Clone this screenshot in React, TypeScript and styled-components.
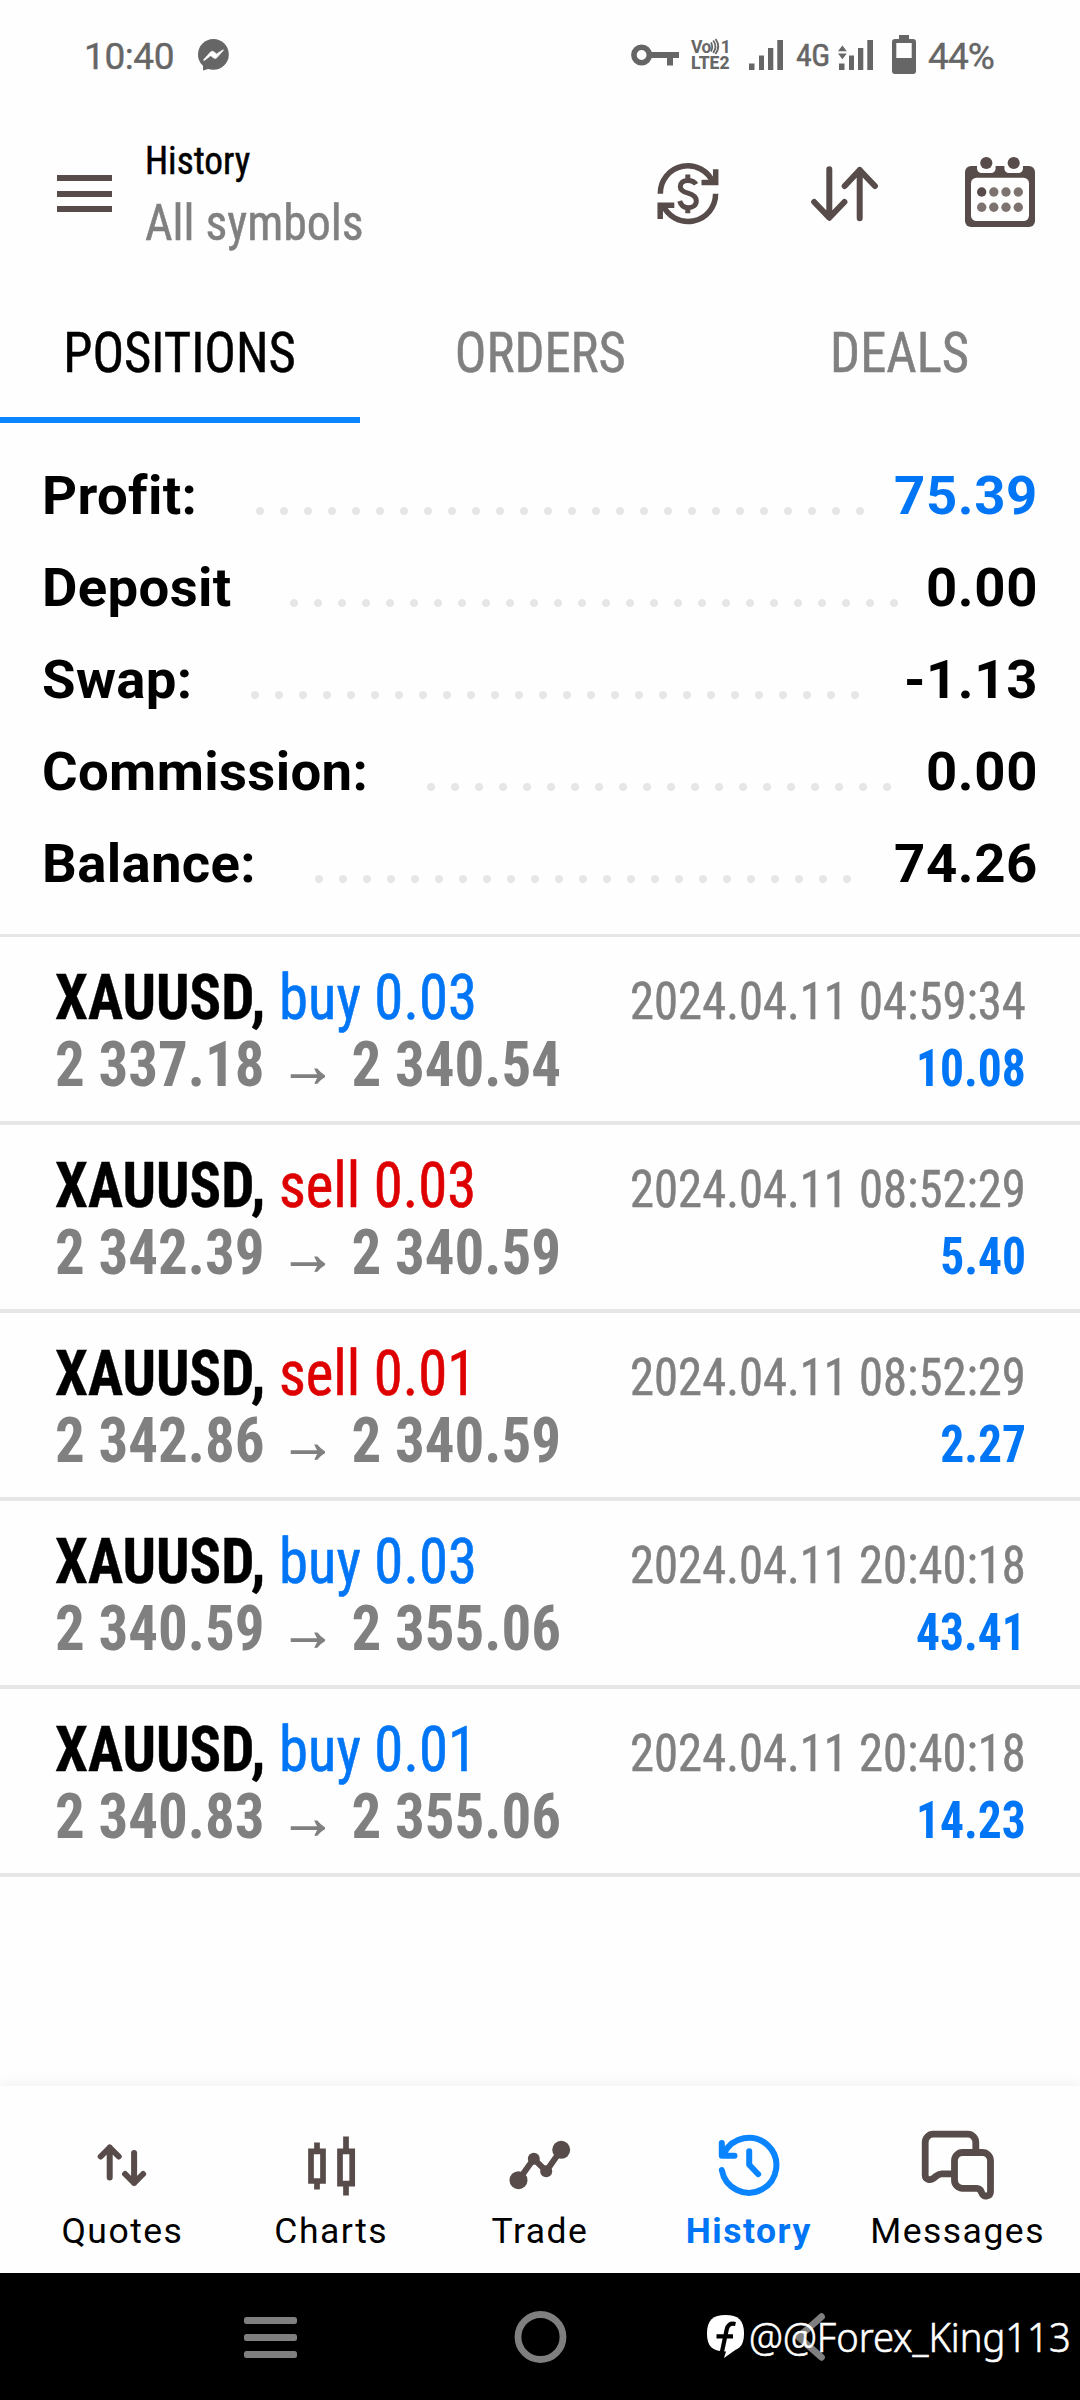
import React from "react";
import styled, { createGlobalStyle } from "styled-components";

const ICON = "#574c49";
const BLUE = "#0075f5";
const BRIGHT = "#0a84ff";
const RED = "#de0000";
const GREY = "#808080";
const STATUS = "#666666";
const LINE = "#e6e6e6";

const GlobalStyle = createGlobalStyle`
  *, *::before, *::after { box-sizing: border-box; }
  body {
    margin: 0;
    background: #fff;
    font-family: Roboto, "Liberation Sans", sans-serif;
    color: #000;
  }
  svg { display: block; flex: none; overflow: visible; }
`;

const Screen = styled.div`
  width: 1080px;
  height: 2400px;
  display: flex;
  flex-direction: column;
  background: #fefefe;
  overflow: hidden;
`;

/* ---------- status bar ---------- */

const StatusBar = styled.div`
  height: 109px;
  display: flex;
  align-items: center;
  color: ${STATUS};
`;

const StatusLeft = styled.div`
  flex: 0 0 631px;
  display: flex;
  align-items: center;
  gap: 23px;
  padding-left: 84px;
`;

const StatusText = styled.span`
  font-size: 37px;
  line-height: 44px;
  padding-top: 5px;
  letter-spacing: -0.9px;
  -webkit-text-stroke: 0.4px currentColor;
`;

const Clock = styled(StatusText)`
  width: 91px;
  letter-spacing: -0.4px;
`;

const StatusRight = styled.div`
  display: flex;
  align-items: center;
`;

const StatusItem = styled.div<{ $width: number; $gap: number }>`
  width: ${(p) => p.$width}px;
  margin-right: ${(p) => p.$gap}px;
  white-space: nowrap;
`;

const Volte = styled.div`
  display: flex;
  flex-direction: column;
  font-weight: 800;
  font-size: 17.5px;
  line-height: 16px;
`;

const VolteTop = styled.div`
  display: flex;
  align-items: center;
  height: 16px;
  letter-spacing: -0.6px;
  font-weight: 700;
`;

const VolteOne = styled.span`
  margin-left: 3px;
`;

const Network = styled.div`
  font-stretch: 75%;
  font-size: 32px;
  line-height: 36px;
  letter-spacing: -0.5px;
  -webkit-text-stroke: 0.5px currentColor;
`;

/* ---------- header ---------- */

const Header = styled.header`
  height: 169px;
  display: flex;
  align-items: center;
  padding: 0 45px 0 57px;
`;

const MenuButton = styled.div`
  width: 55px;
  height: 37px;
  display: flex;
  flex-direction: column;
  justify-content: space-between;
  flex: none;
`;

const MenuBar = styled.span`
  height: 6px;
  background: ${ICON};
`;

const Titles = styled.div`
  flex: 1;
  display: flex;
  flex-direction: column;
  gap: 7px;
  padding: 5px 0 0 33px;
  font-stretch: 75%;
  -webkit-text-stroke: 0.5px currentColor;
  white-space: nowrap;
`;

const Title = styled.div`
  font-size: 39px;
  line-height: 46px;
  transform: scaleX(0.955);
  transform-origin: left center;
`;

const Subtitle = styled.div`
  font-size: 50.5px;
  line-height: 64px;
  color: ${GREY};
  transform: scaleX(0.947);
  transform-origin: left center;
  -webkit-text-stroke: 0.5px ${GREY};
`;

const Actions = styled.div`
  display: flex;
  align-items: center;
  gap: 84.5px;
`;

/* ---------- tabs ---------- */

const Tabs = styled.nav`
  display: grid;
  grid-template-columns: repeat(3, 1fr);
  height: 145px;
  flex: none;
`;

const Tab = styled.div<{ $active?: boolean }>`
  display: flex;
  justify-content: center;
  align-items: center;
  padding-top: 10px;
  border-bottom: 6px solid ${(p) => (p.$active ? BRIGHT : "transparent")};
  color: ${(p) => (p.$active ? "#000" : GREY)};
  font-size: 55px;
  font-stretch: 75%;
`;

const TabLabel = styled.span`
  transform: scaleX(0.957);
  -webkit-text-stroke: 0.5px currentColor;
`;

/* ---------- account summary ---------- */

const Summary = styled.section`
  padding: 28px 42px 23px 42px;
  border-bottom: 3px solid ${LINE};
`;

const SummaryRow = styled.div`
  height: 92px;
  display: flex;
  align-items: center;
  padding-bottom: 4px;
  font-size: 54.5px;
  font-weight: 700;
  letter-spacing: 0.35px;
`;

const Leader = styled.span<{ $dots: number }>`
  width: ${(p) => p.$dots * 24}px;
  height: 8px;
  margin: 32px 0 0 58.5px;
  background: radial-gradient(circle at 4px 4px, #e6e6e6 3.6px, transparent 4.4px) 0 0 / 24px 8px repeat-x;
`;

const SummaryValue = styled.span<{ $accent?: boolean }>`
  margin-left: auto;
  letter-spacing: 0.6px;
  color: ${(p) => (p.$accent ? BLUE : "#000")};
`;

/* ---------- positions ---------- */

const PositionList = styled.main`
  flex: 1;
`;

const Position = styled.article`
  height: 188px;
  padding: 27px 54px 0 55px;
  border-bottom: 4px solid ${LINE};
  font-stretch: 75%;
`;

const PositionLine = styled.div`
  display: flex;
  justify-content: space-between;
  align-items: baseline;
  height: 67px;
  line-height: 67px;
  font-size: 63px;
  white-space: nowrap;
`;

const Instrument = styled.div`
  white-space: pre;
  transform: scaleX(0.933);
  transform-origin: left center;
`;

const Symbol = styled.span`
  font-weight: 700;
  -webkit-text-stroke: 0.4px currentColor;
`;

const Side = styled.span<{ $side: "buy" | "sell" }>`
  color: ${(p) => (p.$side === "buy" ? BLUE : RED)};
  -webkit-text-stroke: 0.6px currentColor;
`;

const Prices = styled.div`
  display: flex;
  align-items: baseline;
  color: ${GREY};
  font-weight: 700;
  transform: scaleX(0.936);
  transform-origin: left center;
`;

const Arrow = styled.span`
  width: 93px;
  display: flex;
  justify-content: center;
  font-family: "Liberation Sans", sans-serif;
  font-size: 60px;
  font-weight: 400;
  -webkit-text-stroke: 1.2px ${GREY};
`;

const Time = styled.time`
  font-size: 51px;
  color: ${GREY};
  transform: scaleX(0.954);
  transform-origin: right center;
  -webkit-text-stroke: 0.5px currentColor;
`;

const Profit = styled.span`
  font-size: 51px;
  font-weight: 700;
  color: ${BLUE};
  transform: scaleX(0.933);
  transform-origin: right center;
`;

/* ---------- bottom navigation ---------- */

const BottomNav = styled.nav`
  height: 187px;
  flex: none;
  display: grid;
  grid-template-columns: repeat(5, 1fr);
  padding: 0 18px;
  background: #fefefe;
  box-shadow: 0 -3px 12px rgba(0, 0, 0, 0.05);
`;

const NavItem = styled.div<{ $active?: boolean }>`
  display: flex;
  flex-direction: column;
  align-items: center;
  padding-top: 38.5px;
  gap: 5px;
  font-size: 35.5px;
  line-height: 42px;
  letter-spacing: 1.5px;
  font-weight: ${(p) => (p.$active ? 700 : 400)};
  color: ${(p) => (p.$active ? BLUE : "#000")};
`;

/* ---------- system navigation ---------- */

const SystemNav = styled.div`
  position: relative;
  height: 127px;
  flex: none;
  display: grid;
  grid-template-columns: repeat(3, 270px);
  justify-content: center;
  align-items: center;
  justify-items: center;
  background: #000;
`;

const Watermark = styled.div`
  position: absolute;
  left: 707px;
  top: 36px;
  display: flex;
  align-items: center;
  gap: 4px;
  height: 55px;
  color: #fff;
`;

const WatermarkText = styled.span`
  font-family: "Noto Sans", sans-serif;
  font-size: 40.5px;
  font-weight: 300;
  line-height: 55px;
  transform: scaleX(0.942);
  transform-origin: left center;
  -webkit-text-stroke: 0.6px #fff;
`;

/* ---------- icons ---------- */

const MessengerIcon = () => (
  <svg width="31" height="32" viewBox="0 0 31 32">
    <circle cx="15.4" cy="15.4" r="15.4" fill={STATUS} />
    <path d="M5 24v7.5l8-2.2z" fill={STATUS} />
    <path d="M5.800 20.500l6.700-7.500q1.500-1.500 3.200-.3l2.900 2.200 6.200-4q1-.4.4.7l-6.400 7.200q-1.400 1.400-3 .2l-3.200-2.300-6.200 4.700q-1.200.4-.6-.9z" fill="#fefefe" stroke="#fefefe" strokeWidth="0.6" />
  </svg>
);

const KeyIcon = () => (
  <svg width="48" height="22" viewBox="0 0 48 22" fill={STATUS}>
    <circle cx="10.6" cy="11" r="7.7" fill="none" stroke={STATUS} strokeWidth="5.6" />
    <path d="M18 8h30v6H18zM36 14h6v7.500h-6z" />
  </svg>
);

const WavesIcon = () => (
  <svg width="7" height="15" viewBox="0 0 7 15" fill="none" stroke={STATUS} strokeWidth="1.8">
    <path d="M0 3.500q2.500 4.500 0 9M2.200 1.500q4.500 6 0 12.500M4.500 0q5.500 7.500 0 15" />
  </svg>
);

const SignalIcon = ({ data }: { data?: boolean }) => (
  <svg width="35" height="30" viewBox="0 0 35 30" fill={STATUS}>
    <g transform={data ? "translate(1 0)" : undefined}>
      <path d="M0 23.500h5.500V30H0zM10 15.500h5V30h-5zM19 8h5.300v22H19zM28.300 0H34v30h-5.700z" />
    </g>
    {data && <path d="M0 11.200L4.400 5.500l4.400 5.700zM0 13.600h8.800l-4.400 5.700z" />}
  </svg>
);

const BatteryIcon = () => (
  <svg width="24" height="39" viewBox="0 0 24 39">
    <path
      fillRule="evenodd"
      fill={STATUS}
      d="M7 0h10v4h4a3 3 0 0 1 3 3v29a3 3 0 0 1-3 3H3a3 3 0 0 1-3-3V7a3 3 0 0 1 3-3h4zM4.300 8v15h15.400V8z"
    />
  </svg>
);

const CurrencyIcon = () => (
  <svg width="66" height="66" viewBox="0 0 66 66" fill="none" stroke={ICON} strokeWidth="5.500">
    <path d="M5.300 32.800A27.500 27.500 0 0 1 58.500 22.500M60.600 32.800A27.500 27.500 0 0 1 7.500 43" />
    <path d="M60.700 8.200V21.500H46.500M5.200 58V44.300H19.300" />
    <path d="M53 20l7 1v-6zM13 46l-7-1v6z" strokeWidth="1" fill={ICON} />
    <path
      strokeWidth="5"
      d="M41 23.300C39.500 20.500 36.500 19.400 32.800 19.400C28 19.400 25.300 22 25.300 25.500C25.300 29.500 28.500 31 33 32.200C38.500 33.800 41.300 35.800 41.300 40C41.300 44 38 46.700 33 46.700C28.800 46.700 26 44.500 24.700 40M32.800 13.500v6M32.800 46.500v5.700"
    />
  </svg>
);

const SortIcon = () => (
  <svg width="75.5" height="66" viewBox="-3.5 0 75.5 66" fill="none" stroke={ICON} strokeWidth="6" strokeLinecap="round" strokeLinejoin="round">
    <path d="M20.800 8.200V56.500M5.700 41L20.800 56.800L35.900 41M51.200 57.200V9M36.200 25L51.200 9L66.400 25" />
  </svg>
);

const CalendarIcon = () => (
  <svg width="70" height="73" viewBox="0 0 70 73">
    <rect y="9" width="70" height="61" rx="6" fill={ICON} />
    <path d="M12 7h18.600v4.500a4.500 4.500 0 0 1-4.500 4.500h-9.600a4.500 4.500 0 0 1-4.500-4.500zM39.400 7H58v4.500a4.500 4.500 0 0 1-4.500 4.500h-9.600a4.500 4.500 0 0 1-4.500-4.500z" fill="#fefefe" />
    <rect x="6" y="20.700" width="58" height="43.300" rx="5.500" fill="#fefefe" />
    <circle cx="21.300" cy="6" r="6.100" fill={ICON} />
    <circle cx="48.700" cy="6" r="6.100" fill={ICON} />
    {[35, 50.300].map((y) =>
      [16.700, 28.800, 41, 53.300].map((x) => (
        <circle key={`${x}-${y}`} cx={x} cy={y} r="4.700" fill={x < 20 && y < 40 ? ICON : "#7d736e"} />
      ))
    )}
  </svg>
);

const NavSvg = ({ color = ICON, width = 6, children }: { color?: string; width?: number; children: React.ReactNode }) => (
  <svg width="80" height="80" viewBox="0 0 80 80" fill="none" stroke={color} strokeWidth={width} strokeLinecap="round" strokeLinejoin="round">
    {children}
  </svg>
);

const QuotesIcon = () => (
  <NavSvg>
    <path d="M27.700 52.500V22.500M18.700 31.500L27.700 22.500L36.700 31.500M52.100 28V58M43.100 49L52.100 58L61.100 49" />
  </NavSvg>
);

const ChartsIcon = () => (
  <NavSvg width={5.700}>
    <g strokeLinecap="butt" strokeLinejoin="miter">
      <path d="M20 26.300H32V56H20zM26 17.500V26M26 56V64.500M49 26.300H61.200V58.700H49zM55 11.500V26M55 59V70.500" />
    </g>
  </NavSvg>
);

const TradeIcon = () => (
  <NavSvg>
    <path d="M18.500 55.200L33.800 33.800L46.200 46.200L61.200 24.800" />
    <g fill={ICON} stroke="none">
      <circle cx="18.500" cy="55.200" r="9" />
      <circle cx="33.800" cy="33.800" r="6" />
      <circle cx="46.200" cy="46.200" r="6" />
      <circle cx="61.200" cy="24.800" r="9" />
    </g>
  </NavSvg>
);

const HistoryIcon = () => (
  <NavSvg color={BRIGHT}>
    <path d="M12.800 45A27.500 27.500 0 1 0 15 28.500M12.800 18V30.800H25.500M40.200 26.200V39.800L49.200 49.200" />
    <path d="M12.800 24l6.500 6.800h-6.500z" fill={BRIGHT} strokeWidth="1" />
  </NavSvg>
);

const MessagesIcon = () => (
  <NavSvg width={6.800}>
    <path strokeLinecap="butt" d="M57.800 25.500V17.200a8 8 0 0 0-8-8H15.200a8 8 0 0 0-8 8V50C7.200 54.500 12 56 15.500 53.300C18.500 51 19.700 48.800 23.500 48.800H34" />
    <path d="M44.500 27.500H64.500a8 8 0 0 1 8 8V66.500C72.500 71.500 66 72.500 64 68.500C62.800 65.500 62 63.300 59 63.300H44.500a8 8 0 0 1-8-8V35.500a8 8 0 0 1 8-8z" />
  </NavSvg>
);

const RecentsIcon = () => (
  <svg width="53" height="42" viewBox="0 0 53 42" fill="#7f7f7f">
    <rect y="1" width="53" height="7" rx="2.500" />
    <rect y="18" width="53" height="7" rx="2.500" />
    <rect y="35" width="53" height="7" rx="2.500" />
  </svg>
);

const HomeIcon = () => (
  <svg width="54" height="54" viewBox="0 0 54 54" fill="none" stroke="#7f7f7f" strokeWidth="6.800">
    <circle cx="27.500" cy="27" r="22.500" />
  </svg>
);

const BackIcon = () => (
  <svg width="54" height="54" viewBox="0 0 54 54" fill="none" stroke="#7f7f7f" strokeWidth="6.800" strokeLinecap="round" strokeLinejoin="round">
    <path d="M38.500 6.700L15.500 27L38.500 47.300" />
  </svg>
);

const FacebookMark = () => (
  <svg width="38" height="44" viewBox="0 0 38 44">
    <path d="M18.500 0C31 0 37 5 37 18.500S31 36.500 18.500 36.500S0 32 0 18.500S6 0 18.500 0z" fill="#fff" />
    <path d="M28.500 9C23 7.800 20.500 10 19.600 15L14.500 39M9.500 21.300H26" fill="none" stroke="#000" strokeWidth="4.200" />
    <path d="M19.500 35L29 34.500L17 43z" fill="#fff" />
  </svg>
);

/* ---------- data ---------- */

const summary = [
  { label: "Profit:", value: "75.39", dots: 26, accent: true },
  { label: "Deposit", value: "0.00", dots: 26 },
  { label: "Swap:", value: "-1.13", dots: 26 },
  { label: "Commission:", value: "0.00", dots: 20 },
  { label: "Balance:", value: "74.26", dots: 23 },
];

type Trade = { side: "buy" | "sell"; lots: string; open: string; close: string; time: string; profit: string };

const trades: Trade[] = [
  { side: "buy", lots: "0.03", open: "2 337.18", close: "2 340.54", time: "2024.04.11 04:59:34", profit: "10.08" },
  { side: "sell", lots: "0.03", open: "2 342.39", close: "2 340.59", time: "2024.04.11 08:52:29", profit: "5.40" },
  { side: "sell", lots: "0.01", open: "2 342.86", close: "2 340.59", time: "2024.04.11 08:52:29", profit: "2.27" },
  { side: "buy", lots: "0.03", open: "2 340.59", close: "2 355.06", time: "2024.04.11 20:40:18", profit: "43.41" },
  { side: "buy", lots: "0.01", open: "2 340.83", close: "2 355.06", time: "2024.04.11 20:40:18", profit: "14.23" },
];

const navItems = [
  { label: "Quotes", icon: <QuotesIcon /> },
  { label: "Charts", icon: <ChartsIcon /> },
  { label: "Trade", icon: <TradeIcon /> },
  { label: "History", icon: <HistoryIcon />, active: true },
  { label: "Messages", icon: <MessagesIcon /> },
];

export default function App() {
  return (
    <Screen>
      <GlobalStyle />
      <StatusBar>
        <StatusLeft>
          <Clock>10:40</Clock>
          <MessengerIcon />
        </StatusLeft>
        <StatusRight>
          <StatusItem $width={48} $gap={12}>
            <KeyIcon />
          </StatusItem>
          <StatusItem $width={39} $gap={19}>
            <Volte>
              <VolteTop>
                Vo
                <WavesIcon />
                <VolteOne>1</VolteOne>
              </VolteTop>
              <span>LTE2</span>
            </Volte>
          </StatusItem>
          <StatusItem $width={34} $gap={13}>
            <SignalIcon />
          </StatusItem>
          <StatusItem $width={31} $gap={11}>
            <Network>4G</Network>
          </StatusItem>
          <StatusItem $width={35} $gap={19}>
            <SignalIcon data />
          </StatusItem>
          <StatusItem $width={24} $gap={12}>
            <BatteryIcon />
          </StatusItem>
          <StatusText>44%</StatusText>
        </StatusRight>
      </StatusBar>

      <Header>
        <MenuButton>
          <MenuBar />
          <MenuBar />
          <MenuBar />
        </MenuButton>
        <Titles>
          <Title>History</Title>
          <Subtitle>All symbols</Subtitle>
        </Titles>
        <Actions>
          <CurrencyIcon />
          <SortIcon />
          <CalendarIcon />
        </Actions>
      </Header>

      <Tabs>
        <Tab $active>
          <TabLabel>POSITIONS</TabLabel>
        </Tab>
        <Tab>
          <TabLabel>ORDERS</TabLabel>
        </Tab>
        <Tab>
          <TabLabel>DEALS</TabLabel>
        </Tab>
      </Tabs>

      <Summary>
        {summary.map((s) => (
          <SummaryRow key={s.label}>
            <span>{s.label}</span>
            <Leader $dots={s.dots} />
            <SummaryValue $accent={s.accent}>{s.value}</SummaryValue>
          </SummaryRow>
        ))}
      </Summary>

      <PositionList>
        {trades.map((t, i) => (
          <Position key={i}>
            <PositionLine>
              <Instrument>
                <Symbol>XAUUSD, </Symbol>
                <Side $side={t.side}>
                  {t.side} {t.lots}
                </Side>
              </Instrument>
              <Time>{t.time}</Time>
            </PositionLine>
            <PositionLine>
              <Prices>
                <span>{t.open}</span>
                <Arrow>→</Arrow>
                <span>{t.close}</span>
              </Prices>
              <Profit>{t.profit}</Profit>
            </PositionLine>
          </Position>
        ))}
      </PositionList>

      <BottomNav>
        {navItems.map((n) => (
          <NavItem key={n.label} $active={n.active}>
            {n.icon}
            <span>{n.label}</span>
          </NavItem>
        ))}
      </BottomNav>

      <SystemNav>
        <RecentsIcon />
        <HomeIcon />
        <BackIcon />
        <Watermark>
          <FacebookMark />
          <WatermarkText>@@Forex_King113</WatermarkText>
        </Watermark>
      </SystemNav>
    </Screen>
  );
}
